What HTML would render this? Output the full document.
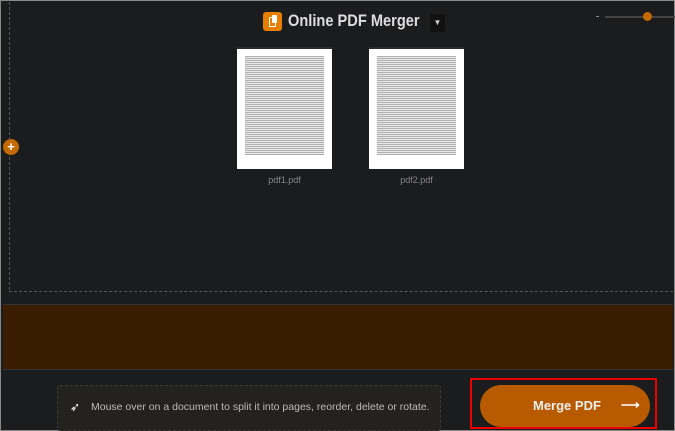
<!DOCTYPE html><html><head><style>
body{margin:0;width:675px;height:431px;background:#1b1c1e;position:relative;overflow:hidden;font-family:"Liberation Sans",sans-serif}
.a{position:absolute}
.pg{background:#fff;border-top:2px solid #2a2b2d}
.lines{position:absolute;left:8px;right:8px;top:7px;bottom:14px;background:repeating-linear-gradient(#b0b0b0 0 1px,#e8e8e8 1px 2px)}
</style></head><body>
<div class="a" style="left:0;top:0;width:673px;height:429px;border:1px solid #888"></div>
<div class="a" style="left:9px;top:2px;height:288px;border-left:1px dashed #555"></div>
<div class="a" style="left:9px;top:291px;width:664px;border-top:1px dashed #555"></div>
<div class="a" style="left:3px;top:304px;width:670px;height:64px;background:#3a1d00;border-top:1px solid #333;border-bottom:1px solid #333"></div>
<div class="a" style="left:263px;top:12px;width:19px;height:19px;background:#e67e00;border-radius:3px"></div>
<div class="a" style="left:269px;top:17px;width:5px;height:8px;border:1px solid #fff;border-radius:1px"></div>
<div class="a" style="left:272px;top:15px;width:5px;height:8px;background:#fff;border-radius:1px"></div>
<div class="a" style="left:288px;top:11px;color:#ddd;font-size:17px;font-weight:bold;white-space:nowrap;transform:scaleX(0.86);transform-origin:left">Online PDF Merger</div>
<div class="a" style="left:430px;top:14px;width:15px;height:18px;background:#111;border-radius:2px;color:#ccc;font-size:8px;text-align:center;line-height:18px">▼</div>
<div class="a" style="left:596px;top:16px;width:3px;height:1px;background:#888"></div>
<div class="a" style="left:605px;top:16px;width:70px;height:2px;background:#444"></div>
<div class="a" style="left:643px;top:12px;width:9px;height:9px;border-radius:50%;background:#c56a00"></div>
<div class="a" style="left:3px;top:139px;width:16px;height:16px;border-radius:50%;background:#c56a00;color:#fff;font-size:13px;line-height:15px;text-align:center;font-weight:bold">+</div>
<div class="a pg" style="left:237px;top:47px;width:95px;height:120px"><div class="lines"></div></div>
<div class="a pg" style="left:369px;top:47px;width:95px;height:120px"><div class="lines"></div></div>
<div class="a" style="left:237px;top:175px;width:95px;text-align:center;color:#888;font-size:9px">pdf1.pdf</div>
<div class="a" style="left:369px;top:175px;width:95px;text-align:center;color:#888;font-size:9px">pdf2.pdf</div>
<div class="a" style="left:57px;top:385px;width:382px;height:44px;background:#24221e;border:1px dashed #3a3630;border-radius:3px"></div>
<div class="a" style="left:70px;top:400px;color:#fff;font-size:12px">➶</div>
<div class="a" style="left:91px;top:401px;color:#bbb;font-size:10.5px">Mouse over on a document to split it into pages, reorder, delete or rotate.</div>
<div class="a" style="left:470px;top:378px;width:183px;height:47px;border:2px solid #e00"></div>
<div class="a" style="left:480px;top:385px;width:170px;height:42px;background:#b85a00;border-radius:21px"></div>
<div class="a" style="left:533px;top:398px;color:#eee;font-size:13px;font-weight:bold">Merge PDF</div>
<div class="a" style="left:621px;top:397px;color:#fff;font-size:13px;font-weight:bold">⟶</div>
</body></html>
